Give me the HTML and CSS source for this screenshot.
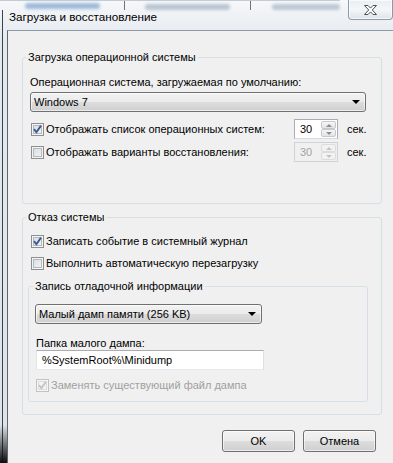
FILE: index.html
```html
<!DOCTYPE html>
<html lang="ru">
<head>
  <meta charset="UTF-8" />
  <title>Загрузка и восстановление</title>
  <link rel="stylesheet" href="styles.css">
</head>
<body>

  <div class="window">
    <div class="titlebar">
      <div class="caption">
        <div class="ghost">
          <span class="ghost-text g1"></span>
          <span class="ghost-tab"></span>
          <span class="ghost-text g2"></span>
          <span class="ghost-tab"></span>
          <span class="ghost-text g3"></span>
        </div>
        <div class="title">Загрузка и восстановление</div>
      </div>
      <div class="close">
        <svg width="15" height="12" viewBox="0 0 15 12">
          <path d="M1.5 1.5h3.5l2.5 2.6 2.5-2.6h3.5l-4.2 4.5 4.2 4.5h-3.5l-2.5-2.6-2.5 2.6h-3.5l4.2-4.5z" fill="#fff" stroke="#4b5159" stroke-width="1" stroke-linejoin="round"/>
        </svg>
      </div>
    </div>

    <div class="client">
      <fieldset class="group group-boot">
        <legend>Загрузка операционной системы</legend>
        <div class="label">Операционная система, загружаемая по умолчанию:</div>
        <div class="combo combo-os"><span>Windows 7</span><i class="arrow"></i></div>

        <div class="timeout-row first">
          <div class="check">
            <span class="box">
              <svg width="11" height="11" viewBox="0 0 11 11"><path d="M2 5.2l2.4 3 4.6-6.6" fill="none" stroke="#3f5a91" stroke-width="1.9"/></svg>
            </span>
            Отображать список операционных систем:
          </div>
          <div class="spin">
            <span class="spin-value">30</span>
            <span class="spin-btns"><span class="up"></span><span class="down"></span></span>
          </div>
          <span>сек.</span>
        </div>

        <div class="timeout-row">
          <div class="check">
            <span class="box"></span>
            Отображать варианты восстановления:
          </div>
          <div class="spin disabled">
            <span class="spin-value">30</span>
            <span class="spin-btns"><span class="up"></span><span class="down"></span></span>
          </div>
          <span>сек.</span>
        </div>
      </fieldset>

      <fieldset class="group group-failure">
        <legend>Отказ системы</legend>
        <div class="check">
          <span class="box">
            <svg width="11" height="11" viewBox="0 0 11 11"><path d="M2 5.2l2.4 3 4.6-6.6" fill="none" stroke="#3f5a91" stroke-width="1.9"/></svg>
          </span>
          Записать событие в системный журнал
        </div>
        <div class="check second">
          <span class="box"></span>
          Выполнить автоматическую перезагрузку
        </div>

        <fieldset class="group group-dump">
          <legend>Запись отладочной информации</legend>
          <div class="combo combo-dump"><span>Малый дамп памяти (256 KB)</span><i class="arrow"></i></div>
          <div class="label dump-label">Папка малого дампа:</div>
          <div class="textbox">%SystemRoot%\Minidump</div>
          <div class="check disabled">
            <span class="box">
              <svg width="11" height="11" viewBox="0 0 11 11"><path d="M2 5.2l2.4 3 4.6-6.6" fill="none" stroke="#c4c4c4" stroke-width="1.9"/></svg>
            </span>
            Заменять существующий файл дампа
          </div>
        </fieldset>
      </fieldset>

      <div class="buttons">
        <button>OK</button>
        <button>Отмена</button>
      </div>
    </div>
  </div>

</body>
</html>
```

FILE: styles.css
```css
* {
  margin: 0;
  padding: 0;
  box-sizing: border-box;
}

body {
  width: 393px;
  height: 463px;
  overflow: hidden;
  font-family: "Liberation Sans", Arial, sans-serif;
  font-size: 11px;
  color: #000;
  background: #e9eef3;
}

.window {
  display: flex;
  flex-direction: column;
  height: 463px;
  background:
    linear-gradient(to bottom, rgba(20, 20, 20, 0), #0c0c0c) no-repeat 0 425px / 7px 38px,
    linear-gradient(to right, transparent 2px, #3c4248 2px 3px, transparent 3px) no-repeat 0 10px / 7px 100%,
    linear-gradient(to bottom, #f6f8fa, #e4e9ee 40px, #dde3e9);
}

/* title bar */
.titlebar {
  display: flex;
  justify-content: space-between;
  align-items: flex-start;
  height: 30px;
}

.ghost {
  display: flex;
  align-items: flex-start;
  height: 9px;
  padding-left: 25px;
  border-top: 1px solid #c3cbd3;
}

.ghost-text {
  height: 6px;
  margin-top: 2px;
  border-radius: 3px;
  filter: blur(1.5px);
}

.g1 { width: 75px; background: #9fbbd9; }
.g2 { width: 85px; margin-top: 3px; background: #b9c5d1; }
.g3 { width: 68px; margin-top: 3px; background: #bcc8d4; }

.ghost-tab {
  width: 1px;
  height: 9px;
  background: #6c737b;
}

.g1 + .ghost-tab { margin: 0 20px 0 24px; }
.g2 + .ghost-tab { margin: 0 21px 0 20px; }

.title {
  padding-left: 9px;
  font-size: 11.7px;
  line-height: 15px;
}

.close {
  display: flex;
  justify-content: center;
  align-items: center;
  width: 45px;
  height: 20px;
  border: 1px solid #8e9aa7;
  border-top: none;
  border-radius: 0 0 4px 4px;
  background: linear-gradient(to bottom, #e9eef3, #f4f6f9 50%, #dde4eb);
  box-shadow: inset 0 0 0 1px rgba(255, 255, 255, 0.7);
}

/* client area */
.client {
  flex: 1;
  margin-left: 7px;
  padding: 19px 0 0 14px;
  background: #f0f0f0;
  border-top: 1px solid #8d99a6;
  border-left: 1px solid #5d6771;
}

.group {
  border: 1px solid #d5dfe5;
  border-radius: 3px;
  min-inline-size: 0;
}

.group legend {
  padding: 0 2px;
  line-height: 15px;
}

.group-boot,
.group-failure {
  width: 360px;
  padding: 10px 7px 41px 7px;
}

.group-boot legend,
.group-failure legend {
  margin-left: -4px;
}

.group-failure {
  margin-top: 6px;
  padding: 8px 7px 12px 7px;
}

.group-dump {
  width: 340px;
  margin: 8px 0 0 -2px;
  padding: 10px 6px 8px 6px;
}

.group-dump legend {
  margin-left: -2px;
}

.label {
  line-height: 15px;
}

/* combo boxes */
.combo {
  display: flex;
  justify-content: space-between;
  align-items: center;
  height: 20px;
  padding: 0 5px 0 3px;
  border: 1px solid #707070;
  border-radius: 3px;
  background: linear-gradient(to bottom, #f2f2f2, #ebebeb 50%, #dddddd 50%, #cfcfcf);
  box-shadow: inset 0 0 0 1px rgba(255, 255, 255, 0.6);
}

.combo-os {
  width: 336px;
  margin-top: 2px;
}

.combo-dump {
  width: 227px;
}

.arrow {
  width: 0;
  height: 0;
  border-left: 4px solid transparent;
  border-right: 4px solid transparent;
  border-top: 4px solid #000;
}

/* checkboxes */
.check {
  display: flex;
  align-items: center;
  height: 16px;
}

.check .box {
  display: flex;
  justify-content: center;
  align-items: center;
  width: 13px;
  height: 13px;
  margin: 0 2px 0 1px;
  border: 1px solid #8e8f8f;
  background: linear-gradient(135deg, #d6d9dd, #f7f7f8);
  box-shadow: inset 0 0 0 1px #f4f4f4, inset 0 0 0 2px #b4b9be;
}

.check.second {
  margin-top: 6px;
}

.check.disabled {
  margin-top: 7px;
  color: #a0a0a0;
}

.check.disabled .box {
  border-color: #c2c2c2;
  background: #f4f4f4;
  box-shadow: inset 0 0 0 1px #f7f7f7, inset 0 0 0 2px #dcdcdc;
}

/* timeout rows */
.timeout-row {
  display: grid;
  grid-template-columns: 255px 44px auto;
  column-gap: 9px;
  align-items: center;
  height: 20px;
  margin-top: 3px;
}

.timeout-row.first {
  margin-top: 7px;
}

.spin {
  display: flex;
  height: 20px;
  border: 1px solid #abadb3;
  border-bottom-color: #d6dbe1;
  background: #fff;
}

.spin-value {
  flex: 1;
  padding-left: 5px;
  line-height: 18px;
}

.spin-btns {
  display: flex;
  flex-direction: column;
  width: 16px;
  padding: 1px 1px 1px 0;
}

.spin-btns span {
  flex: 1;
  display: flex;
  justify-content: center;
  align-items: center;
  border: 1px solid #c5c9ce;
  border-radius: 2px;
  background: linear-gradient(to bottom, #f7f7f7, #e2e2e2);
}

.spin-btns .up::after {
  content: "";
  border-left: 3px solid transparent;
  border-right: 3px solid transparent;
  border-bottom: 3px solid #8a8f96;
}

.spin-btns .down::after {
  content: "";
  border-left: 3px solid transparent;
  border-right: 3px solid transparent;
  border-top: 3px solid #8a8f96;
}

.spin.disabled {
  border-color: #d2d2d2;
  background: #f0f0f0;
  color: #a3a3a3;
}

.spin.disabled .spin-btns span {
  border-color: #dcdcdc;
  background: #f2f2f2;
}

.spin.disabled .spin-btns span::after {
  border-top-color: #c3c3c3;
  border-bottom-color: #c3c3c3;
}

/* dump folder */
.dump-label {
  margin: 12px 0 0 1px;
  line-height: 14px;
}

.textbox {
  width: 228px;
  height: 20px;
  margin-left: 1px;
  padding-left: 5px;
  line-height: 18px;
  border: 1px solid #abadb3;
  border-left-color: #e2e3ea;
  border-right-color: #dbdfe6;
  border-bottom-color: #e3e9ef;
  background: #fff;
}

/* buttons */
.buttons {
  display: flex;
  justify-content: flex-end;
  gap: 8px;
  width: 360px;
  margin-top: 15px;
  padding-right: 6px;
}

button {
  width: 73px;
  height: 22px;
  font-family: inherit;
  font-size: 11px;
  color: #000;
  border: 1px solid #707070;
  border-radius: 3px;
  background: linear-gradient(to bottom, #f2f2f2, #ebebeb 50%, #dddddd 50%, #cfcfcf);
  box-shadow: inset 0 0 0 1px rgba(255, 255, 255, 0.6);
}
```
